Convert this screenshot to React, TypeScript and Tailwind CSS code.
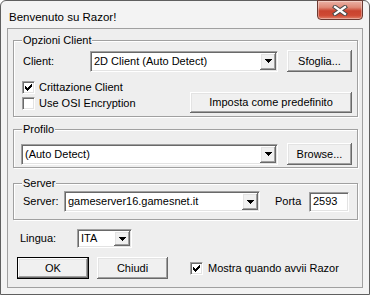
import React from "react";

const sunken =
  "border border-t-[#a0a0a0] border-l-[#a0a0a0] border-r-white border-b-white shadow-[inset_1px_1px_0_#696969,inset_-1px_-1px_0_#e3e3e3]";
const raised =
  "bg-[#f0f0f0] shadow-[inset_-1px_-1px_0_#696969,inset_1px_1px_0_#ffffff,inset_-2px_-2px_0_#a0a0a0,inset_2px_2px_0_#e3e3e3]";
const etched = "border border-[#a0a0a0] shadow-[inset_1px_1px_0_#ffffff,1px_1px_0_#ffffff]";

function Arrow() {
  return (
    <div className={`w-[16px] shrink-0 flex items-center justify-center ${raised}`}>
      <svg width="7" height="4" viewBox="0 0 7 4" shapeRendering="crispEdges">
        <rect x="0" y="0" width="7" height="1" fill="#000" />
        <rect x="1" y="1" width="5" height="1" fill="#000" />
        <rect x="2" y="2" width="3" height="1" fill="#000" />
        <rect x="3" y="3" width="1" height="1" fill="#000" />
      </svg>
    </div>
  );
}

function Combo({ className, text }: { className: string; text: string }) {
  return (
    <div className={`${sunken} bg-white p-[1px] flex ${className}`}>
      <div className="flex-1 flex items-center pl-[2px] whitespace-nowrap overflow-hidden">{text}</div>
      <Arrow />
    </div>
  );
}

function Check({ checked }: { checked: boolean }) {
  const cols = [2, 3, 4, 3, 2, 1, 0];
  return (
    <div className={`w-[13px] h-[13px] shrink-0 bg-white ${sunken} flex items-center justify-center`}>
      {checked && (
        <svg width="7" height="7" viewBox="0 0 7 7" shapeRendering="crispEdges">
          {cols.map((y, x) => (
            <rect key={x} x={x} y={y} width="1" height="3" fill="#000" />
          ))}
        </svg>
      )}
    </div>
  );
}

function Button({ className, children }: { className: string; children: React.ReactNode }) {
  return <div className={`${raised} flex items-center justify-center ${className}`}>{children}</div>;
}

function GroupLabel({ children }: { children: React.ReactNode }) {
  return (
    <div className="h-[13px] leading-[13px] -mt-[7px] -mb-[6px] ml-[8px] px-[1px] w-fit bg-[#eeeeee]">
      {children}
    </div>
  );
}

export default function App() {
  return (
    <div className="w-[370px] h-[296px] bg-white font-['Liberation_Sans',Arial,sans-serif] text-[11px] text-black leading-[13px]">
      <div className="w-[370px] h-[295px] border border-[#5f5f5f] rounded-t-[6px] bg-[#f3f3f3] flex flex-col">
        {/* Title bar */}
        <div className="h-[27px] flex items-start">
          <div className="pl-[8px] pt-[9px] text-[11.5px] leading-[14px]">Benvenuto su Razor!</div>
          <div className="ml-auto mr-[6px] -mt-[1px] w-[46px] h-[20px] rounded-b-[4px] border border-[#6b3a32] bg-[linear-gradient(#eab2a6_0%,#df8a78_35%,#c9432e_55%,#cf4a34_80%,#e07f68_100%)] shadow-[inset_0_0_0_1px_rgba(255,255,255,0.35)] flex items-center justify-center">
            <svg width="16" height="11" viewBox="0 0 16 11">
              <path d="M3 2 L13 9 M13 2 L3 9" stroke="#4a4a4a" strokeWidth="4.2" strokeLinecap="square" />
              <path d="M3 2 L13 9 M13 2 L3 9" stroke="#ffffff" strokeWidth="2.2" strokeLinecap="square" />
            </svg>
          </div>
        </div>

        {/* Client area */}
        <div className="mx-[6px] h-[260px] border border-[#a0a0a0] bg-[#eeeeee] flex flex-col">
          {/* Opzioni Client */}
          <div className={`mt-[11px] ml-[5px] w-[345px] h-[77px] ${etched} flex flex-col`}>
            <GroupLabel>Opzioni Client</GroupLabel>
            <div className="pt-[9px] pl-[9px] flex items-center h-[31px]">
              <div className="w-[67px]">Client:</div>
              <Combo className="w-[188px] h-[21px]" text="2D Client (Auto Detect)" />
              <Button className="ml-[9px] w-[65px] h-[22px]">Sfoglia...</Button>
            </div>
            <div className="flex items-start pl-[8px]">
              <div className="mt-[9px] flex flex-col gap-[3px]">
                <div className="flex items-center h-[13px]">
                  <Check checked={true} />
                  <div className="ml-[4px]">Crittazione Client</div>
                </div>
                <div className="flex items-center h-[13px]">
                  <Check checked={false} />
                  <div className="ml-[4px]">Use OSI Encryption</div>
                </div>
              </div>
              <Button className="ml-auto mr-[5px] mt-[20px] w-[162px] h-[21px]">Imposta come predefinito</Button>
            </div>
          </div>

          {/* Profilo */}
          <div className={`mt-[12px] ml-[5px] w-[345px] h-[39px] ${etched} flex flex-col`}>
            <GroupLabel>Profilo</GroupLabel>
            <div className="pt-[13px] pl-[7px] flex items-center h-[35px]">
              <Combo className="w-[257px] h-[21px]" text="(Auto Detect)" />
              <Button className="ml-[9px] w-[65px] h-[22px]">Browse...</Button>
            </div>
          </div>

          {/* Server */}
          <div className={`mt-[15px] ml-[5px] w-[345px] h-[37px] ${etched} flex flex-col`}>
            <GroupLabel>Server</GroupLabel>
            <div className="pt-[7px] pl-[9px] flex items-center h-[28px]">
              <div className="w-[41px]">Server:</div>
              <Combo className="w-[196px] h-[21px]" text="gameserver16.gamesnet.it" />
              <div className="ml-[15px] w-[34px]">Porta</div>
              <div className={`${sunken} bg-white w-[40px] h-[20px] flex items-center pl-[3px]`}>2593</div>
            </div>
          </div>

          {/* Lingua */}
          <div className="mt-[9px] pl-[12px] flex items-center h-[19px]">
            <div className="w-[57px]">Lingua:</div>
            <Combo className="w-[55px] h-[19px]" text="ITA" />
          </div>

          {/* Bottom buttons */}
          <div className="mt-[9px] pl-[9px] flex items-center h-[22px]">
            <div className="w-[72px] h-[22px] border border-black">
              <Button className="w-full h-full">OK</Button>
            </div>
            <Button className="ml-[8px] w-[71px] h-[22px]">Chiudi</Button>
            <div className="ml-[22px] flex items-center">
              <Check checked={true} />
              <div className="ml-[5px]">Mostra quando avvii Razor</div>
            </div>
          </div>
        </div>
      </div>
    </div>
  );
}
